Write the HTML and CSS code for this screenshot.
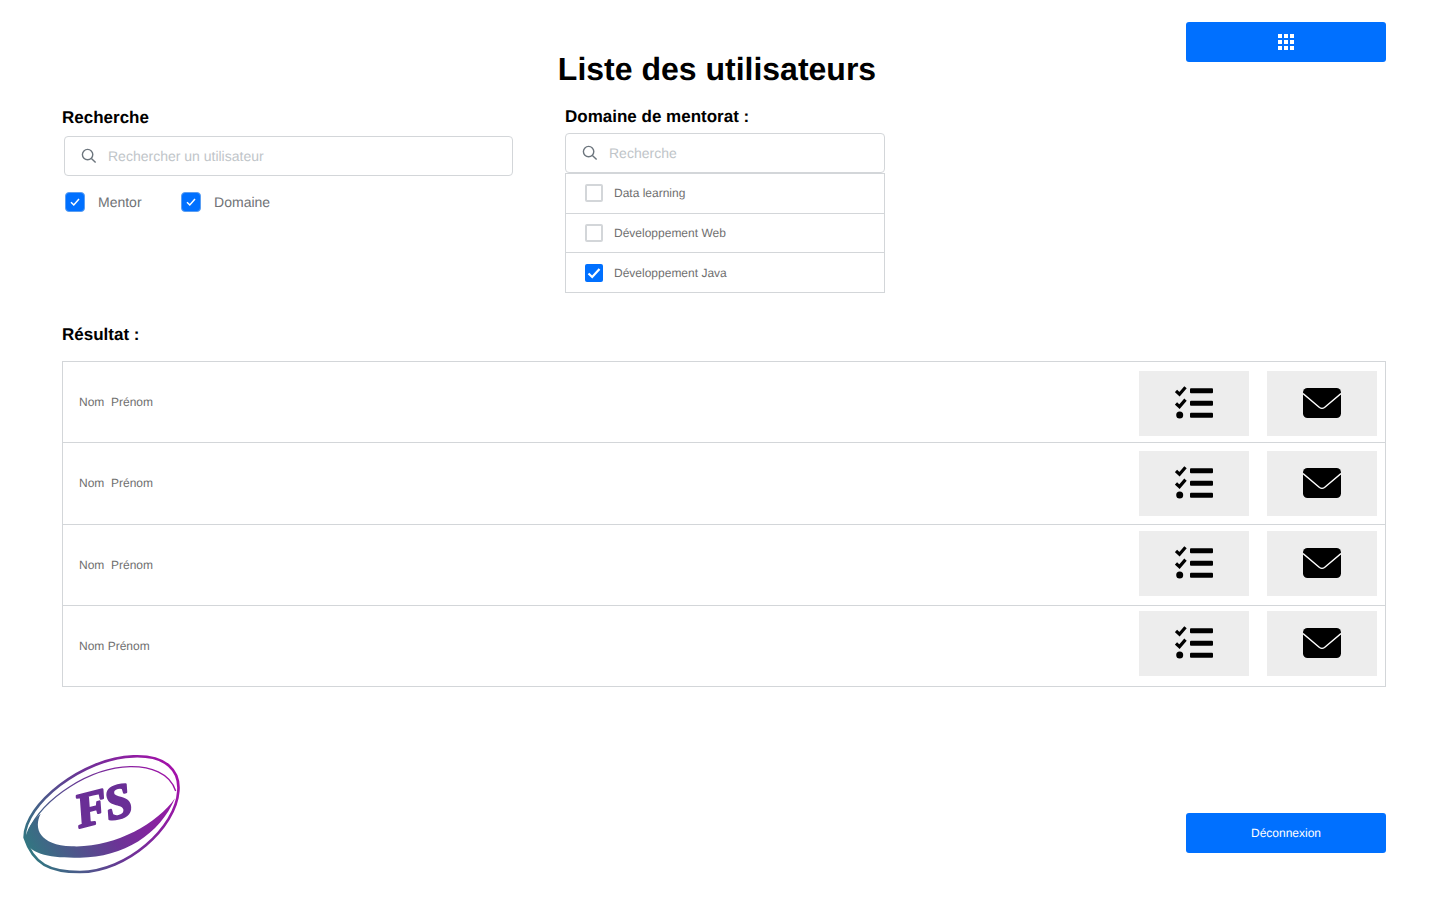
FILE: index.html
```html
<!DOCTYPE html>
<html>
<head>
    <title>Liste des utilisateurs</title>
    <link rel="stylesheet" href="styles.css">
</head>
<body>
    <header class="header">
        <h1 class="title">Liste des utilisateurs</h1>
        <button class="btn btn-menu">
            <svg width="16" height="16" viewBox="0 0 16 16" fill="#fff">
                <rect x="0" y="0" width="4" height="4"/><rect x="6" y="0" width="4" height="4"/><rect x="12" y="0" width="4" height="4"/>
                <rect x="0" y="6" width="4" height="4"/><rect x="6" y="6" width="4" height="4"/><rect x="12" y="6" width="4" height="4"/>
                <rect x="0" y="12" width="4" height="4"/><rect x="6" y="12" width="4" height="4"/><rect x="12" y="12" width="4" height="4"/>
            </svg>
        </button>
    </header>

    <section class="filters">
        <div class="filter-user">
            <h2 class="label">Recherche</h2>
            <div class="search search-user">
                <svg class="search-icon" width="16" height="16" viewBox="0 0 16 16" fill="none" stroke="#6c757d" stroke-width="1.4">
                    <circle cx="6.6" cy="6.6" r="5.2"/><path d="M10.4 10.4L14.6 14.6"/>
                </svg>
                <span class="placeholder">Rechercher un utilisateur</span>
            </div>
            <div class="options">
                <label class="option">
                    <span class="check check-on">
                        <svg width="10" height="10" viewBox="0 0 10 10" fill="none" stroke="#fff" stroke-width="1.5"><path d="M1 5.2L3.8 8L9 2"/></svg>
                    </span>
                    Mentor
                </label>
                <label class="option">
                    <span class="check check-on">
                        <svg width="10" height="10" viewBox="0 0 10 10" fill="none" stroke="#fff" stroke-width="1.5"><path d="M1 5.2L3.8 8L9 2"/></svg>
                    </span>
                    Domaine
                </label>
            </div>
        </div>
        <div class="filter-domain">
            <h2 class="label">Domaine de mentorat :</h2>
            <div class="search">
                <svg class="search-icon" width="16" height="16" viewBox="0 0 16 16" fill="none" stroke="#6c757d" stroke-width="1.4">
                    <circle cx="6.6" cy="6.6" r="5.2"/><path d="M10.4 10.4L14.6 14.6"/>
                </svg>
                <span class="placeholder">Recherche</span>
            </div>
            <ul class="domains">
                <li class="domain"><span class="box"></span>Data learning</li>
                <li class="domain"><span class="box"></span>Développement Web</li>
                <li class="domain">
                    <span class="box box-on">
                        <svg width="14" height="14" viewBox="0 0 14 14" fill="none" stroke="#fff" stroke-width="2.2"><path d="M1.5 7.5L5.2 11L12.5 3"/></svg>
                    </span>
                    Développement Java
                </li>
            </ul>
        </div>
    </section>

    <section class="results">
        <h2 class="label">Résultat :</h2>
        <div class="table">
            <div class="row">
                <span class="name">Nom&nbsp; Prénom</span>
                <div class="actions">
                    <button class="action">
                        <svg width="38" height="34" viewBox="0 0 38 34"><use href="#icon-list"/></svg>
                    </button>
                    <button class="action">
                        <svg width="38" height="30" viewBox="0 0 38 30"><use href="#icon-mail"/></svg>
                    </button>
                </div>
            </div>
            <div class="row">
                <span class="name">Nom&nbsp; Prénom</span>
                <div class="actions">
                    <button class="action">
                        <svg width="38" height="34" viewBox="0 0 38 34"><use href="#icon-list"/></svg>
                    </button>
                    <button class="action">
                        <svg width="38" height="30" viewBox="0 0 38 30"><use href="#icon-mail"/></svg>
                    </button>
                </div>
            </div>
            <div class="row">
                <span class="name">Nom&nbsp; Prénom</span>
                <div class="actions">
                    <button class="action">
                        <svg width="38" height="34" viewBox="0 0 38 34"><use href="#icon-list"/></svg>
                    </button>
                    <button class="action">
                        <svg width="38" height="30" viewBox="0 0 38 30"><use href="#icon-mail"/></svg>
                    </button>
                </div>
            </div>
            <div class="row">
                <span class="name">Nom Prénom</span>
                <div class="actions">
                    <button class="action">
                        <svg width="38" height="34" viewBox="0 0 38 34"><use href="#icon-list"/></svg>
                    </button>
                    <button class="action">
                        <svg width="38" height="30" viewBox="0 0 38 30"><use href="#icon-mail"/></svg>
                    </button>
                </div>
            </div>
        </div>
    </section>

    <footer class="footer">
        <svg class="logo" width="200" height="140" viewBox="0 0 600 420">
            <defs>
                <linearGradient id="logo-grad" gradientUnits="userSpaceOnUse" x1="80" y1="340" x2="530" y2="100">
                    <stop offset="0" stop-color="#2f7a80"/>
                    <stop offset="0.5" stop-color="#6b3496"/>
                    <stop offset="1" stop-color="#a311a9"/>
                </linearGradient>
            </defs>
            <path d="M74 290C72 190 250 50 400 46C500 42 540 90 535 150C528 260 380 393 240 393C150 393 100 370 74 290Z" fill="none" stroke="url(#logo-grad)" stroke-width="8"/>
            <path d="M85 270C130 170 270 80 390 77C450 76 510 95 527 150" fill="none" stroke="url(#logo-grad)" stroke-width="4"/>
            <path d="M74 295C82 262 98 238 122 218C100 262 118 312 215 316C340 322 470 250 525 172C480 280 370 350 240 350C150 352 87 340 74 295Z" fill="url(#logo-grad)"/>
            <text class="logo-text" x="226" y="244" transform="rotate(-14 300 200)">FS</text>
        </svg>
        <button class="btn btn-logout">Déconnexion</button>
    </footer>

    <svg class="sprites" width="0" height="0">
        <symbol id="icon-list" viewBox="0 0 38 34">
            <rect x="15" y="2.3" width="23" height="5" rx="1"/>
            <rect x="15" y="14.7" width="23" height="5" rx="1"/>
            <rect x="15" y="26.7" width="23" height="5" rx="1"/>
            <path d="M1 5L4.5 8.2L10.5 1.2M1 17.4L4.5 20.6L10.5 13.6" stroke="#000" stroke-width="3.2" fill="none"/>
            <circle cx="4.7" cy="29" r="3.5"/>
        </symbol>
        <symbol id="icon-mail" viewBox="0 0 38 30">
            <rect width="38" height="30" rx="4.5"/>
            <path d="M0 5.5L16.5 19.5Q19 21.2 21.5 19.5L38 5.5" stroke="#fff" stroke-width="1.4" fill="none"/>
        </symbol>
    </svg>
</body>
</html>
```

FILE: styles.css
```css
* {
    box-sizing: border-box;
}
body {
    font-family: "Liberation Sans", Arial, sans-serif;
    margin: 0;
    background-color: white;
    color: #000;
    text-rendering: geometricPrecision;
}
.header {
    display: flex;
    align-items: flex-start;
    padding: 22px 54px 0 62px;
}
.title {
    flex: 1;
    margin: 29px 0 0;
    padding-left: 186px;
    font-size: 32px;
    line-height: 37px;
    text-align: center;
}
.btn {
    display: flex;
    align-items: center;
    justify-content: center;
    width: 200px;
    height: 40px;
    flex: none;
    border: 0;
    border-radius: 3px;
    background-color: #0070ff;
    color: white;
    font-family: inherit;
    text-rendering: inherit;
}
.label {
    margin: 0;
    font-size: 17px;
    line-height: 20px;
    font-weight: bold;
}
.filters {
    display: flex;
    align-items: flex-start;
    padding: 19px 0 0 62px;
}
.filter-user {
    width: 503px;
    padding-top: 1px;
}
.filter-domain {
    width: 320px;
}
.search {
    display: flex;
    align-items: center;
    gap: 11px;
    height: 40px;
    margin-top: 6px;
    padding-left: 16px;
    border: 1px solid #d3d6d9;
    border-radius: 4px;
}
.search-user {
    width: 449px;
    margin: 8px 0 0 2px;
}
.search-icon {
    flex: none;
}
.placeholder {
    font-size: 14px;
    color: #bfc5c9;
}
.options {
    display: flex;
    gap: 39.5px;
    margin: 16px 0 0 3px;
}
.option {
    display: flex;
    align-items: center;
    gap: 13px;
    font-size: 14px;
    color: #6f7276;
}
.check {
    display: flex;
    align-items: center;
    justify-content: center;
    width: 20px;
    height: 20px;
    border-radius: 4px;
}
.check-on {
    background-color: #0070ff;
    border: 1px solid #5c9ff2;
}
.domains {
    list-style: none;
    margin: 0;
    padding: 0;
    border: 1px solid #d3d6d9;
}
.domain {
    display: flex;
    align-items: center;
    gap: 11px;
    height: 39.5px;
    padding-left: 19px;
    border-bottom: 1px solid #d3d6d9;
    font-size: 12px;
    color: #707070;
}
.domain:last-child {
    height: 39px;
    border-bottom: 0;
}
.box {
    display: flex;
    align-items: center;
    justify-content: center;
    width: 18px;
    height: 18px;
    border: 2px solid #d3d6d9;
    border-radius: 2px;
}
.box-on {
    background-color: #0070ff;
    border: 0;
}
.results {
    padding: 32px 54px 0 62px;
}
.table {
    margin-top: 16px;
    border: 1px solid #d3d6d9;
}
.row {
    display: flex;
    align-items: center;
    justify-content: space-between;
    height: 81.25px;
    padding-left: 16px;
    border-bottom: 1px solid #d3d6d9;
}
.row:last-child {
    height: 80.25px;
    border-bottom: 0;
}
.name {
    font-size: 12px;
    color: #707070;
}
.actions {
    display: flex;
    align-self: flex-start;
    gap: 18px;
    margin-right: 8px;
}
/* the buttons sit on an 80px step, the rows are a bit taller */
.row:nth-child(1) .actions {
    margin-top: 9px;
}
.row:nth-child(2) .actions {
    margin-top: 7.75px;
}
.row:nth-child(3) .actions {
    margin-top: 6.5px;
}
.row:nth-child(4) .actions {
    margin-top: 5.25px;
}
.action {
    display: flex;
    align-items: center;
    justify-content: center;
    width: 110px;
    height: 65px;
    padding: 0 0 1px;
    border: 0;
    background-color: #ededed;
}
.footer {
    display: flex;
    align-items: flex-start;
    justify-content: space-between;
    margin-top: 54px;
    padding-right: 54px;
}
.logo {
    display: block;
}
.logo-text {
    font-family: "Liberation Serif", serif;
    font-size: 145px;
    font-weight: bold;
    font-style: italic;
    letter-spacing: -6px;
    fill: #6a2f96;
    stroke: #6a2f96;
    stroke-width: 7px;
    stroke-linejoin: round;
}
.btn-logout {
    margin-top: 72px;
    font-size: 12px;
}
.sprites {
    display: block;
    height: 0;
}
```
